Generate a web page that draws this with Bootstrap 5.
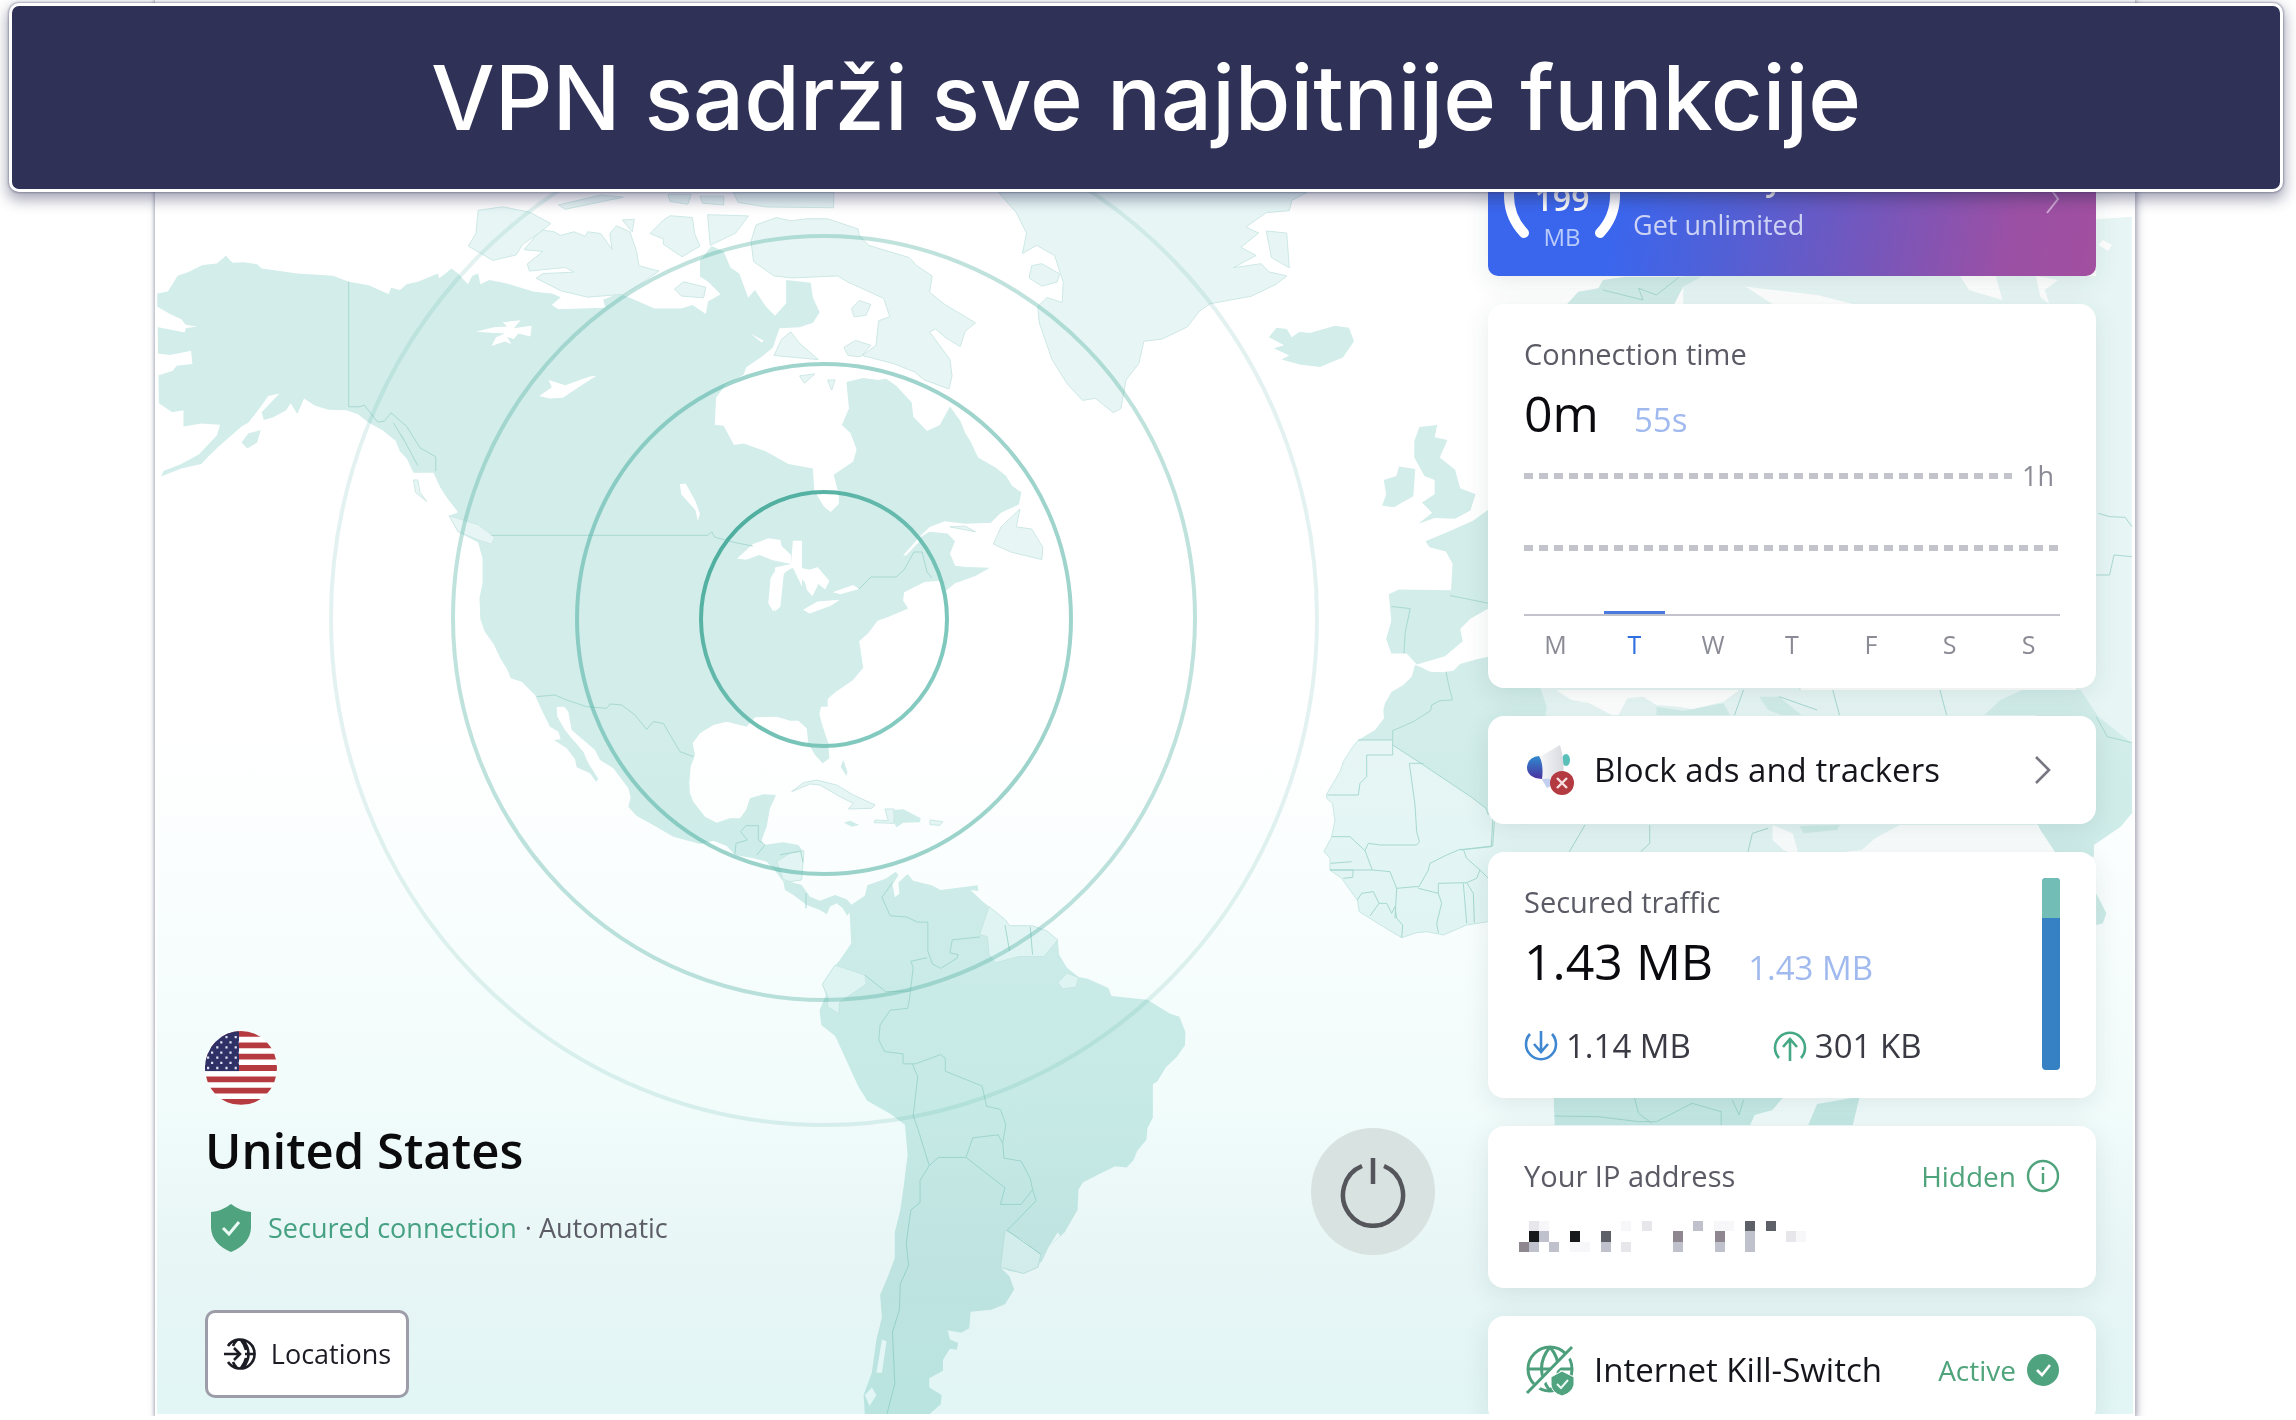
<!DOCTYPE html>
<html lang="hr">
<head>
<meta charset="utf-8">
<meta name="viewport" content="width=device-width, initial-scale=1">
<title>VPN sadrži sve najbitnije funkcije</title>
<link href="https://cdn.jsdelivr.net/npm/bootstrap@5.3.0/dist/css/bootstrap.min.css" rel="stylesheet">
<style>
  body { font-family: "Open Sans", "Noto Sans", sans-serif; font-size: 29px; line-height: 40px; color: #15151c; background: #fff; overflow: hidden; }
  .headline { position: absolute; top: 3px; left: 9px; right: 13px; height: 189px; z-index: 5; background: #2f3157; border: 3px solid #fff; border-radius: 10px; box-shadow: 0 6px 14px 2px rgba(47,49,87,.42), 0 0 2px 1px rgba(47,49,87,.35); color: #fff; }
  .headline h1 { font-family: Inter, "Open Sans", sans-serif; font-size: 90px; font-weight: 500; line-height: 108px; }
  .vpn-window { height: calc(100vh - 4px); margin: 0 161px 0 155px; border: 2px solid #fff; border-top: 0; box-shadow: 0 0 3px 1px #b3b6c3, 2px 2px 8px rgba(60,60,90,.4); overflow: hidden; background: linear-gradient(#fff 52%, #f1fcfb 78%, #e7f5f5 90%, #e1f6f5); }
  .world { position: absolute; inset: 0; width: 100%; height: 100%; mix-blend-mode: multiply; }
  .land { fill: #d2edea; }
  .pale { fill: #e7f6f5; stroke: #cde8e5; stroke-width: 1; stroke-linejoin: round; }
  .seamless { stroke: none; }
  .water { fill: #fff; }
  .frontier { fill: none; stroke: #a9d9d3; stroke-width: 1; }
  .world path { vector-effect: non-scaling-stroke; }
  .pulse { fill: none; stroke: #4fb0a2; stroke-width: 4; }
  .place { padding: 0 0 16px 48px; }
  .flag { width: 72px; height: 74px; margin-bottom: 11px; }
  .country { font-size: 49px; font-weight: 600; line-height: 68px; margin-bottom: 20px; color: #0b0b0d; }
  .link-state { height: 48px; margin-bottom: 58px; color: #5d5d68; padding-left: 5px; font-size: 27px; }
  .go { color: #45a182; }
  .btn-places { height: 88px; width: 204px; border: 3px solid #9d9da9; border-radius: 10px; background: #fff; font-size: 27px; gap: 14px; padding: 0; color: #1c1c24; }
  .btn-power { width: 124px; height: 127px; border-radius: 50%; background: #d8e2e1; margin: 0 53px 159px 0; padding: 0; border: 0; }
  .side { width: 608px; margin-right: 37px; padding-top: 140px; gap: 28px; }
  .tile { background: #fff; border-radius: 16px; box-shadow: 0 6px 26px rgba(30,60,60,.1); padding: 30px 36px; flex: none; }
  .promo { height: 136px; padding: 0 36px 0 16px; border-radius: 10px; background: linear-gradient(100deg, #3a66ee 0 22%, #5160d6 40%, #7357bd 62%, #9a50a5 85%, #a24f9f); color: #fff; text-decoration: none; gap: 13px; }
  .quota { position: relative; width: 116px; height: 116px; text-align: center; padding-top: 40px; font-size: 32px; font-weight: 600; line-height: 38px; }
  .quota svg { position: absolute; inset: 0; }
  .quota small { display: block; font-size: 24px; font-weight: 400; color: #b9cbfa; }
  .promo-text { font-size: 32px; font-weight: 600; line-height: 30px; padding-top: 23px; }
  .promo-text span { display: block; padding-top: 14px; color: #ccd3f4; font-size: 27px; font-weight: 400; line-height: 36px; }
  .caption { color: #5b5b66; }
  .figures { margin-top: 7px; line-height: 64px; gap: 35px; }
  .big { font-size: 50px; color: #0b0b0f; }
  .second { font-size: 33px; color: #a0b9ee; }
  .chart { margin-top: 4px; }
  .grid-row { height: 40px; }
  .grid-row + .grid-row { margin: 32px 0 43px; }
  .dashes { height: 6px; background: repeating-linear-gradient(90deg, #c3c3cc 0 9px, transparent 9px 15px); }
  .today-mark { height: 3px; width: 61px; margin-left: 80px; background: #4a79e0; }
  .base-line { height: 2px; background: #c3c3cc; }
  .days { margin: 8px -8px 0; font-size: 25px; color: #8b8b96; }
  .hours { font-size: 27px; color: #8b8b96; margin: 0 6px 0 10px; }
  .days .now { color: #2f6fdf; }
  .tile-row { padding: 30px 36px; height: 108px; line-height: 48px; font-size: 33px; gap: 19px; color: #15151c; text-decoration: none; }
  .flow { margin-top: 24px; line-height: 44px; font-size: 33px; color: #3a3a44; }
  .sent { margin-left: 82px; }
  .split { width: 18px; height: 192px; border-radius: 4px; overflow: hidden; margin: -4px 0 -8px; background: #3680c4; }
  .split div { background: #72bdb5; height: 21%; }
  .state { color: #4fa47c; gap: 10px; font-size: 28px; }
  .masked { margin: 25px 0 5px -6px; }
</style>
<script src="https://cdn.jsdelivr.net/npm/bootstrap@5.3.0/dist/js/bootstrap.bundle.min.js"></script>
</head>
<body>
<header class="headline d-flex align-items-center justify-content-center">
  <h1 class="m-0">VPN sadrži sve najbitnije funkcije</h1>
</header>

<main class="vpn-window position-relative d-flex align-items-end">
  <svg class="world" viewBox="157 0 1976 1414" preserveAspectRatio="xMinYMin slice" aria-hidden="true">
    <!-- Africa, Europe and Asia -->
    <g transform="translate(1300 640) scale(.33333)">
      <path class="pale" d="M175,300 155,325 130,365 120,395 80,462 80,475 97,490 105,540 95,590 72,635 90,655 90,690 125,715 150,750 172,780 178,815 250,860 305,893 350,878 380,875 430,885 500,855 565,845 1200,845 1500,640 1500,100 565,50 278,290Z"/>
      <path class="land" d="M345,75 335,110 310,135 275,155 255,190 250,210 252,235 225,270 175,300 278,300 278,315 370,375 515,472 558,505 565,525 700,500 740,200 690,50 565,50 530,58 480,72 460,92 430,97 390,95 360,80Z"/>
      <path class="frontier" d="M438,95 445,130 457,180 420,182 395,195 392,212 340,245 278,272V345H200V410L180,430 175,465H82M278,300H175M278,315 370,375 515,472 558,505 565,525M370,370H328L345,495 350,575 358,605 350,615H240L205,610 195,632 150,590H95M195,632 217,690 270,695 290,745 285,835M217,690 90,690M290,745 345,740 357,740 385,690 390,670 440,645 480,628 490,628 500,655 540,690 530,715 500,728 415,730 415,760 355,745M490,628 578,618 583,545M415,760 425,790 410,850 415,878M490,730 500,850M500,728 520,760 523,848M540,690 565,715M172,780 185,760 220,755 237,790 210,828M237,790 260,790 275,820 285,800 290,835 308,855 305,893M90,690 160,690 158,712 130,715M92,670 155,665"/>
    </g>
    <g transform="translate(700 180) scale(.5102 .40816)">
      <path class="land" d="M1800,700H1545V808L1515,835 1470,860 1422,885 1430,900 1462,910 1475,940 1472,1005 1370,1003 1350,1015 1355,1080 1345,1125 1355,1160 1385,1160 1405,1187 1460,1167 1495,1130 1490,1100 1510,1075 1545,1050H1800Z"/>
      <path class="frontier" d="M1470,1018 1510,1028 1545,1037M1355,1045 1392,1050 1382,1110 1380,1160"/>
      <path class="land" d="M1410,605 1445,600 1440,630 1465,637 1450,680 1480,710 1490,755 1520,770 1510,810 1480,830 1440,828 1408,842 1435,815 1415,790 1440,770 1440,735 1420,725 1400,680 1400,640Z M1340,735 1365,725 1370,702 1402,708 1398,775 1360,802 1337,798 1345,770Z"/>
      <path class="land" d="M1115,385 1130,362 1150,365 1160,385 1175,372 1195,375 1245,357 1272,362 1282,395 1260,435 1215,458 1175,452 1140,440 1155,430 1125,412 1145,405Z"/>
    </g>
    <g transform="translate(1460 180) scale(.44643 .33333)">
      <path class="pale seamless" d="M500,288H1120L1140,330 1215,360 1200,288H1425V118L1505,110V1900H1380V372H500Z"/>
      <path class="water" d="M700,372 640,320 800,345 880,372Z M1440,180 1460,195 1452,212 1430,195Z M1290,288 1300,350 1320,372 1310,330 1340,300Z"/>
      <path class="land" d="M240,372 265,335 310,325 320,300 370,290H540L500,320 480,372Z"/>
      <path class="frontier" d="M320,330 410,360 400,325 440,345 490,292M1430,1000 1455,1010 1490,1012 1505,1040M1505,1130 1465,1125 1455,1185 1425,1185"/>
    </g>
    <g transform="translate(1460 690) scale(.44643 .33333)">
      <path class="pale seamless" d="M300,0H1505V300H1290V405H985L975,430 930,445 900,480 765,500H300Z"/>
      <path class="land" d="M0,0H130L165,75H0Z M440,50 500,62 590,40 605,75H440Z M670,20H715L765,75H720L690,60Z M1175,75 1210,30 1260,0H1390L1430,80 1505,160V370L1480,410 1420,465V500H1340L1290,400V75Z M760,408 850,405 845,420 770,430Z M1425,610 1448,670 1440,700 1425,705Z"/>
      <path class="water" d="M170,0H625L590,35 520,58 490,50 440,45 410,20 375,25 355,75H340L290,40 250,30 215,0Z M700,405 745,430 760,500 725,480 700,450Z M985,405H1295L1325,500H890L930,445Z"/>
      <path class="frontier" d="M635,0 615,75M715,20 800,60M835,0 850,75M1075,0 1090,75M280,405 245,485M425,405V460L405,485M690,415 655,430 645,485M0,480 70,470 75,350M1425,80 1450,140 1505,158"/>
    </g>
    <g transform="translate(1460 1080) scale(.44643 .33333)">
      <path class="land" d="M210,50H725L700,90 660,105 650,135H212Z M800,72 895,50 880,135H780Z"/>
      <path class="frontier" d="M212,108 310,110 400,125 440,125 520,70 585,95V135M390,50 400,100 430,130M610,60 625,105 635,60"/>
    </g>
    <!-- North America, eastern half -->
    <g transform="translate(700 180) scale(.5102 .40816)">
      <path class="land" d="M287,495 320,485 350,490 365,487 385,505 415,545 418,580 445,615 470,600 490,555 510,590 520,620 530,640 545,680 580,705 600,725 612,750 630,765 625,795 590,815 570,840 520,842 480,836 450,850 425,880 450,862 485,866 500,885 490,915 500,945 522,948 568,950 540,970 500,988 480,1008 470,982 440,985 400,1010 398,1030 408,1050 370,1070 348,1080 330,1110 312,1130 320,1195 300,1225 265,1255 238,1285 233,1310 200,1310V850L255,815 272,795V770L262,722 300,690 307,660 295,620 278,600 292,560Z"/>
      <path class="water" d="M73,925 100,890 130,877 157,882 160,895 178,915 180,935 140,930 115,918 90,930Z M148,957 176,950 160,975 155,1040 142,1055 134,1035 138,975Z M180,945 215,955 230,948 252,985 245,1003 232,990 220,1020 210,1005 205,985 190,965Z M203,1052 230,1035 272,1029 255,1045 215,1062Z M260,1010 300,992 312,1002 275,1015Z M398,920 428,878 436,878 404,920Z"/>
      <path class="pale" d="M627,806 620,850 650,855 672,900 670,930 610,912 575,892 590,850Z"/>
      <path class="pale" d="M110,110 150,92 178,100 210,95 250,95 310,120 312,135 330,160 410,190 425,210 455,235 450,275 480,305 540,350 520,370 510,408 480,385 462,365 450,372 490,440 494,480 488,512 440,490 420,470 380,450 318,430 345,405 350,345 372,335 360,290 290,250 270,235 180,240 145,235 105,200 100,150Z M145,430 160,390 178,372 195,400 232,440Z M297,315 312,295 335,305 325,332 302,335Z M282,410 305,393 335,405 315,433 290,430Z M65,30H262V68L130,66 75,55Z M15,85 95,88 70,130 20,160Z M195,480 225,475 205,498Z M250,490 265,490 258,515Z M490,850 520,848 540,862Z"/>
      <path class="pale" d="M585,30H1190L1160,50 1155,75 1110,80 1070,115 1095,130 1060,165 1090,185 1045,215 1100,205 1115,225 1150,235 1130,255 1080,285 1000,303 980,320 955,360 905,390 870,395 860,450 835,490 825,560 810,570 775,535 750,540 720,500 690,440 665,350 662,310 680,288 710,300 712,250 695,185 660,160 632,180 640,130 620,80Z M650,210 670,205 705,230 700,250 670,260 645,240Z M1110,125 1150,130 1155,215 1120,190Z"/>
    </g>
    <!-- North America, western half -->
    <g transform="translate(150 180) scale(.44643 .35714)">
      <path class="land" d="M16,318 40,312 62,268 85,258 118,238 150,234 170,212 185,232 210,230 240,236 250,248 330,262 410,268 445,285 490,295 535,320 540,302 560,308 575,292 600,285 645,262 648,275 662,262 675,248 690,262 712,292 722,268 735,262 740,292 760,280 800,290 840,305 860,313 900,318 920,328 900,350 915,362 1020,358 1015,335 1050,318 1075,330 1130,360 1190,360 1215,350 1245,375 1250,340 1278,320 1250,285 1232,270V225L1258,185 1285,200 1300,245 1320,262 1340,330 1355,308 1380,355 1400,380 1425,345 1425,280 1480,288 1485,330 1500,370 1485,400 1455,412 1410,415 1395,470 1370,495 1335,525 1330,545 1290,572 1268,610 1265,685 1285,688 1308,742 1330,738 1380,760 1430,795 1485,808 1488,870 1510,915 1525,930 1545,905H1568V960H1400V1330H1518V1475H890L870,1440 850,1412 808,1395 800,1370 785,1340 770,1300 750,1265 740,1230 738,1170 745,1130V1060L735,1015 690,985 670,940 690,930 665,890 650,860 635,820 590,820 575,780 560,760 550,730 520,700 490,680 465,655 440,645 400,643 370,632 345,612 330,655 315,625 305,645 275,665 255,672 250,650 290,598 265,605 245,640 220,680 205,690 155,745 130,775 115,795 70,808 25,830 30,815 70,795 110,768 150,715 157,685 115,682 75,690V645L50,650 20,625Z M205,735 220,710 248,700 240,735 218,752Z"/>
      <path class="land" d="M1200,940H1568V1010H1440L1436,1075 1400,1085 1385,1130V1200L1400,1208 1412,1195 1420,1100 1440,1085 1480,1190 1465,1205 1480,1212 1568,1170V1330L1518,1430H1200Z"/>
      <path class="water" d="M1315,1060 1350,1020 1385,1003 1412,1008 1415,1025 1436,1050 1436,1075 1395,1065 1365,1050 1335,1063Z M1398,1098 1432,1085 1412,1115 1407,1190 1396,1208 1385,1185 1390,1115Z M1436,1082 1480,1094 1498,1088 1522,1122 1514,1142 1498,1128 1485,1162 1472,1145 1466,1120 1450,1100Z M1463,1203 1495,1180 1545,1175 1525,1192 1477,1214Z"/>
      <path class="water" d="M10,350 45,375 70,390 80,405 105,410 80,415 78,427 10,410Z M10,485 45,490 92,478 95,515 60,520 50,535 10,550Z M730,425 770,412 800,410 790,398 830,393 815,415 855,408 852,438 825,430 815,445 800,440 810,460 795,452 765,465 775,440 795,430 765,428Z M872,605 900,580 893,560 930,575 985,550 1000,548 960,580 925,610 895,612Z M1187,852 1200,850 1222,900 1232,935 1227,955 1222,925 1190,880Z M1345,430 1375,450 1370,455Z"/>
      <path class="pale" d="M735,85 790,75 850,90 898,122 870,150 835,180 820,210 768,225 713,185 730,150Z M838,195 865,155 880,140 905,145 920,155 950,145 975,158 980,145 1010,150 1035,195 1030,150 1045,128 1075,145 1090,200 1095,240 1140,255 1105,285 1060,320 980,328 920,310 865,275 880,262 950,258 930,245 850,255 845,235 880,200Z M1150,112 1165,100 1215,105 1220,150 1232,185 1192,215 1150,180 1150,165 1120,150Z M1058,112 1085,110 1080,145Z M915,70 1010,42 1060,48 930,82Z M1160,40H1212L1205,68 1165,60Z M1232,45H1285V70L1238,65Z M1195,285 1245,300 1240,330 1190,325 1175,305Z M670,940 735,965 772,1000 765,1020 740,1010 690,985Z M590,840 600,840 605,875 620,900 595,875Z"/>
      <path class="frontier" d="M445,285V635L470,635 480,630 510,678 525,675 540,652 575,690 605,750 640,775V815M765,995H1250L1258,985 1265,1000 1310,1015 1350,1025M545,680 570,730 560,710M570,730 600,800"/>
    </g>
    <path class="frontier" d="M859,589 871,577H896L904,570 914,552 922,552 927,572 932,578"/>
    <!-- Mexico, Central America and the Caribbean -->
    <g transform="translate(500 680) scale(.33333)">
      <path class="land" d="M60,0 105,45 125,90 150,140 175,155 182,178 162,180 200,205 225,238 230,262 270,280 288,305 295,297 265,250 250,215 215,175 195,150 172,110 170,82 190,78 205,95 215,150 250,180 285,210 300,240 340,265 385,325 392,352 385,380 410,408 450,430 520,470 600,492 640,482 680,498 705,525 760,535 800,545 822,568 850,605 855,630 880,645 920,675 960,690 980,703 990,680 1010,670 1028,685 1042,707 1060,680 1040,658 1005,645 960,662 930,650 905,615 850,600 840,570 910,515 895,495 850,487 790,495 785,480 800,440 810,385 828,345 790,343 750,355 738,390 720,415 690,415 650,428 615,410 580,365 570,340 568,310 572,260 585,225 578,190 600,160 640,135 680,125 740,140 765,112 830,110 870,122 895,122 920,145 925,190 945,225 968,250 988,235 985,190 965,130 958,100 965,70 1000,40 1045,0Z"/>
      <path class="land" d="M1030,240 1042,275 1040,288 1022,260Z M1032,428 1050,422 1078,435 1055,440Z M1182,390 1210,388 1262,415 1260,427 1210,428 1190,442 1180,425Z"/>
      <path class="pale" d="M875,335 910,308 950,300 1010,315 1060,345 1125,375 1115,385 1045,387 1060,370 1020,350 960,315 930,312Z M1155,387H1182V430L1122,428 1125,420 1165,422Z M1290,420 1328,425 1320,436 1290,434Z M830,545 870,520 912,512 905,600 870,605 850,598Z"/>
      <path class="frontier" d="M110,50 165,45 200,60 260,80 320,85 330,72 365,75 405,105 440,148 460,125 490,130 540,215 580,230M705,522 708,490 742,480 722,455 738,437H775V480L795,495 770,525M918,640V685"/>
    </g>
    <!-- South America -->
    <g transform="translate(780 840) scale(.45918 .36994)">
      <path class="land" d="M150,180 185,150 190,122 230,105 252,86 258,95 245,120 250,155 260,145 258,115 278,92 290,110 330,122 350,135 430,122 432,138 415,135 440,165 455,180 490,215 500,232 550,232 580,245 605,270 608,310 625,345 650,370 670,375 715,400 722,422 800,432 850,470 870,478 883,520 882,555 865,585 840,615 822,652 812,660V750L800,780 798,810 778,840 770,865 755,885 730,882 700,900 660,925 650,945 648,1000 620,1060 585,1100 570,1140 530,1170 500,1165 480,1155 500,1180 510,1215 490,1255 460,1270 415,1275 412,1320 395,1332 365,1325 370,1350 388,1360 385,1378 370,1375 355,1405V1435L325,1455V1480L352,1500 350,1525 322,1556H185L182,1500 200,1440 210,1350 222,1290 218,1230 235,1180 250,1130V1060L262,1000 270,930 278,850 272,770 240,740 190,705 170,665 150,610 120,530 90,500 86,460 100,420 92,390 120,340 130,325 155,280 152,205Z"/>
      <path class="pale" d="M120,338 185,365 188,390 130,438 128,470 103,450 105,425 92,390Z M455,180 490,215 500,232 550,232 580,245 605,270 575,315 520,315 470,332 455,310 452,262 435,255Z M490,1055 530,1080 568,1120 562,1155 530,1172 480,1155Z M605,385 625,360 650,372 645,398 615,402Z"/>
      <path class="water" d="M222,1350 232,1355 222,1440 210,1440Z M200,1480 210,1500 195,1530 185,1500Z M605,1060 610,1070 585,1100Z"/>
      <path class="frontier" d="M245,115 222,155 240,205 275,208 300,222H322V300L332,335 350,347 385,320 388,310 370,305 375,270 435,262M320,318 285,328 290,345 282,430 278,455 240,460 218,500 215,540 228,572 268,578V605H295L350,580 360,590V625L440,665 450,720 480,728 492,770 485,820 488,860 525,868 545,915 550,945 525,985 480,985 490,940 405,858 345,858 325,880 300,780 290,745 300,640 288,605M405,858 420,805 475,797 485,820M185,365 230,410 282,408M490,230 500,300M545,235 550,310M325,880 305,920V980L285,1000 275,1090 280,1150 262,1200 260,1270 245,1330 250,1470 232,1556M550,945 558,975 495,1055 568,1120M0,40 45,30 50,60"/>
    </g>
    <defs>
      <linearGradient id="fadeDown" x1="0" y1="0" x2="1" y2="1"><stop offset="0" stop-color="#45a999"/><stop offset="1" stop-color="#8fd0c7"/></linearGradient>
    </defs>
    <ellipse class="pulse" cx="824" cy="619" rx="123" ry="127" style="stroke:url(#fadeDown)"/>
    <ellipse class="pulse" cx="824" cy="619" rx="247" ry="255" opacity=".55"/>
    <ellipse class="pulse" cx="824" cy="618" rx="371" ry="382" opacity=".36"/>
    <ellipse class="pulse" cx="824" cy="618" rx="493" ry="507" opacity=".16"/>
  </svg>

  <section class="place position-relative">
    <svg class="flag d-block" viewBox="0 0 72 72" preserveAspectRatio="none" role="img" aria-label="US">
      <defs><clipPath id="round"><circle cx="36" cy="36" r="36"/></clipPath></defs>
      <g clip-path="url(#round)">
        <rect width="72" height="72" fill="#fff"/>
        <path stroke="#b53b40" stroke-width="5.6" d="M0,2.8H72M0,14H72M0,25H72M0,36H72M0,47H72M0,58H72M0,69H72"/>
        <rect width="34" height="39" fill="#2f3066"/>
        <path stroke="#dfe1f4" stroke-width="2.2" stroke-dasharray="2.2 7" d="M2,6H34M6,11H34M2,16H34M6,21H34M2,26H34M6,31H34M2,36H34"/>
      </g>
    </svg>
    <h2 class="country">United States</h2>
    <div class="link-state d-flex align-items-center">
      <svg width="42" height="48" viewBox="0 0 42 48" aria-hidden="true"><path fill="#50a37f" d="M21,0Q30,7 41,8V24Q40,40 21,48Q2,40 1,24V8Q12,7 21,0Z"/><path d="m13 24 6 6 10-12" fill="none" stroke="#eafaf5" stroke-width="3"/></svg>
      <span class="go ms-3">Secured connection</span><span class="ms-2">· Automatic</span>
    </div>
    <button type="button" class="btn btn-places d-flex align-items-center justify-content-center">
      <svg width="34" height="34" viewBox="0 0 34 34" fill="none" stroke="#1c1c24" stroke-width="2.6" aria-hidden="true"><path d="M5,9A14.500,14.500 0 1 1 5,25M1,17H17M11,11 17,17 11,23M14,3Q11,6 10,9M14,31Q11,28 10,25M20,3Q31,17 20,31M18,3Q22,8 23,13M23,21Q22,26 18,31M22,17H32"/></svg>
      <span>Locations</span>
    </button>
  </section>

  <button type="button" class="btn btn-power position-relative ms-auto" aria-label="Power">
    <svg width="68" height="72" viewBox="0 0 68 72" fill="none" stroke="#55565c" stroke-width="4.5" aria-hidden="true"><path d="M23,10A30,31 0 1 0 45,10M34,2V28"/></svg>
  </button>

  <aside class="side position-relative align-self-stretch d-flex flex-column flex-shrink-0">
    <a href="#" class="tile promo d-flex align-items-start">
      <div class="quota">
        <svg viewBox="0 0 116 116" fill="none" stroke="#fff" stroke-width="10" stroke-linecap="round" aria-hidden="true"><path d="M20,93A52,54 0 0 1 20,17M96,93A52,54 0 0 0 96,17"/></svg>
        199<small>MB</small>
      </div>
      <div class="promo-text flex-grow-1">Free daily<span>Get unlimited</span></div>
      <svg class="mt-5" width="14" height="28" viewBox="0 0 14 28" fill="none" stroke="#d3a9d6" stroke-width="2" aria-hidden="true"><path d="M1,-4 12,11 1,25"/></svg>
    </a>

    <section class="tile pb-4">
      <div class="caption">Connection time</div>
      <div class="figures d-flex align-items-baseline"><span class="big">0m</span><span class="second">55s</span></div>
      <div class="chart">
        <div class="grid-row d-flex align-items-center"><div class="dashes flex-grow-1"></div><span class="hours">1h</span></div>
        <div class="grid-row d-flex align-items-center"><div class="dashes w-100"></div></div>
        <div class="today-mark"></div>
        <div class="base-line"></div>
      </div>
      <div class="days d-flex text-center">
        <span class="col">M</span><span class="col now">T</span><span class="col">W</span><span class="col">T</span><span class="col">F</span><span class="col">S</span><span class="col">S</span>
      </div>
    </section>

    <a href="#" class="tile tile-row d-flex align-items-center">
      <svg width="51" height="52" viewBox="0 0 51 52" aria-hidden="true">
        <defs>
          <linearGradient id="horn" x1="0" y1="0" x2="1" y2="0"><stop offset="0" stop-color="#f8f8fa"/><stop offset="1" stop-color="#d9dae0"/></linearGradient>
          <linearGradient id="grip" x1="0" y1="0" x2="0" y2="1"><stop offset="0" stop-color="#2f8ad0"/><stop offset="1" stop-color="#4a31a0"/></linearGradient>
        </defs>
        <ellipse cx="42" cy="16" rx="4" ry="6" fill="#58c0b8"/>
        <path fill="#c3cff0" d="m16 32 7 12 6-3-6-12z"/>
        <path fill="url(#horn)" d="M14,14 36,1Q41,16 39,34L18,35Z"/>
        <path fill="url(#grip)" d="M15,12Q4,13 3,23Q3,34 18,35Q20,20 15,12Z"/>
        <circle cx="38" cy="39" r="12" fill="#b23a40"/>
        <path stroke="#f6dfe1" stroke-width="2.4" d="m33 34 10 10m0-10L33,44"/>
      </svg>
      <span>Block ads and trackers</span>
      <svg class="ms-auto me-2" width="18" height="30" viewBox="0 0 18 30" fill="none" stroke="#777782" stroke-width="2.6" aria-hidden="true"><path d="m2 2 13 13L2,28"/></svg>
    </a>

    <section class="tile d-flex justify-content-between">
      <div>
        <div class="caption">Secured traffic</div>
        <div class="figures d-flex align-items-baseline"><span class="big">1.43 MB</span><span class="second">1.43 MB</span></div>
        <div class="flow d-flex align-items-center">
          <svg width="34" height="34" viewBox="0 0 34 34" fill="none" stroke="#3f87d0" stroke-width="2.6" aria-hidden="true"><path d="M6,5A15,15 0 1 0 28,5M17,2V22M10,15 17,23 24,15"/></svg>
          <span class="ms-2">1.14 MB</span>
          <svg class="sent me-2" width="34" height="34" viewBox="0 0 34 34" fill="none" stroke="#45a885" stroke-width="2.6" aria-hidden="true"><path d="M6,29A15,15 0 1 1 28,29M17,32V11M10,18 17,10 24,18"/></svg>
          <span>301 KB</span>
        </div>
      </div>
      <div class="split"><div></div></div>
    </section>

    <section class="tile">
      <div class="d-flex align-items-center">
        <span class="caption me-auto">Your IP address</span>
        <span class="state d-flex align-items-center">Hidden
          <svg width="34" height="34" viewBox="0 0 34 34" fill="none" stroke="#4fa47c" stroke-width="2.4" aria-hidden="true"><circle cx="17" cy="17" r="15"/><path d="M17,14V25M17,8V11"/></svg>
        </span>
      </div>
      <svg class="masked d-block" width="290" height="32" viewBox="0 0 290 32" shape-rendering="crispEdges" aria-hidden="true">
        <path fill="#17191b" d="M11,10h10v11h-10zM52,10h10v11h-10z"/>
        <path fill="#5d6066" d="M83,10h10v11h-10zM227,0h10v10h-10zM248,0h10v10h-10z"/>
        <path fill="#8f878f" d="M1,21h10v10h-10zM155,10h10v11h-10zM197,10h10v11h-10z"/>
        <path fill="#bfc1cc" d="M21,10h10v11h-10zM11,21h10v10h-10zM31,21h10v10h-10zM83,21h10v10h-10zM155,21h10v10h-10zM175,0h10v10h-10zM197,21h10v10h-10zM227,10h10v21h-10z"/>
        <path fill="#e6e6eb" d="M11,0h10v10h-10zM124,0h10v10h-10zM103,21h10v10h-10zM268,10h10v11h-10z"/>
        <path fill="#f7f7f9" d="M21,0h10v10h-10zM52,21h20v10h-20zM103,0h10v10h-10zM196,0h20v10h-20zM278,10h10v11h-10z"/>
      </svg>
    </section>

    <section class="tile tile-row d-flex align-items-center">
      <svg width="51" height="52" viewBox="0 0 51 52" fill="none" stroke="#4d9f7c" stroke-width="3" aria-hidden="true">
        <circle cx="26" cy="25" r="22"/><path d="M26,3Q9,24 26,47M26,3Q43,24 26,47M5,25H47"/>
        <path stroke="#fff" stroke-width="7" d="M4,51 50,5"/><path d="M3,49 48,3"/>
        <path fill="#50a37f" stroke="#fff" stroke-width="1" d="M38,27 50,33V41Q48,49 38,52Q28,49 27,41V33Z"/><path stroke="#eafaf5" stroke-width="2" d="m33 40 4 4 7-8"/>
      </svg>
      <span>Internet Kill-Switch</span>
      <span class="state d-flex align-items-center ms-auto">Active
        <svg width="34" height="34" viewBox="0 0 34 34" aria-hidden="true"><circle cx="17" cy="17" r="16" fill="#50a37f"/><path d="m11 17 5 5 8-10" fill="none" stroke="#fff" stroke-width="2.6"/></svg>
      </span>
    </section>
  </aside>
</main>
</body>
</html>
